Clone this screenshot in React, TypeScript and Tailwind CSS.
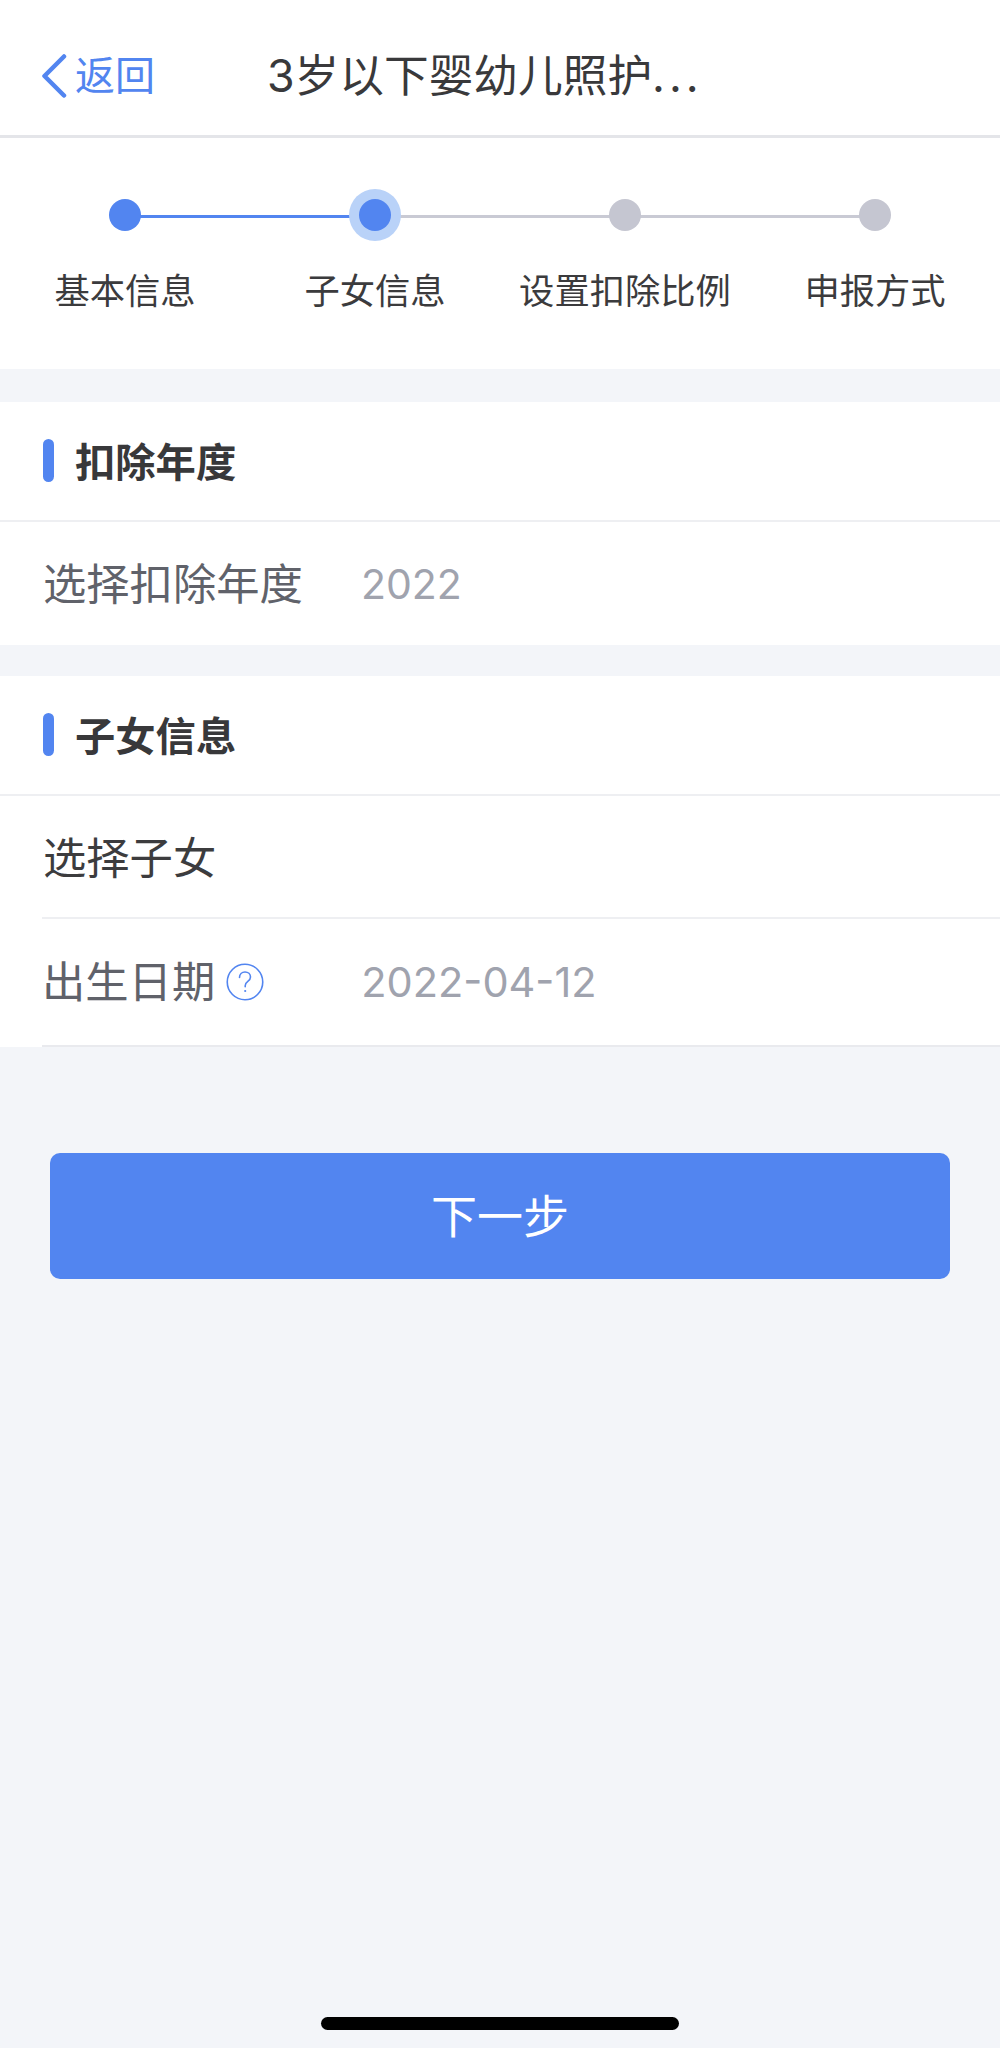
import React from "react";

const font = { fontFamily: '"Inter", "Noto Sans CJK SC", sans-serif' };

function Step({ label, state }: { label: string; state: "done" | "current" | "todo" }) {
  return (
    <div className="flex w-[250px] flex-col items-center">
      <div className="flex h-[54px] w-[54px] items-center justify-center">
        {state === "current" ? (
          <div className="relative z-10 flex h-[52px] w-[52px] items-center justify-center rounded-full bg-[#b9d2f8]">
            <div className="h-[32px] w-[32px] rounded-full bg-[#5285f0]" />
          </div>
        ) : (
          <div className={"relative z-10 h-[32px] w-[32px] rounded-full " + (state === "done" ? "bg-[#5285f0]" : "bg-[#c5c6d1]")} />
        )}
      </div>
      <div className="mt-[27px] whitespace-nowrap text-[35.3px] leading-[46px] text-[#3b3b3d]">{label}</div>
    </div>
  );
}

function SectionTitle({ title }: { title: string }) {
  return (
    <div className="flex h-[120px] items-center border-b-2 border-[#eeeff2] pb-[1px] pl-[43px]">
      <div className="h-[43px] w-[11px] rounded-full bg-[#5285f0]" />
      <div className="ml-[21px] mt-[5px] text-[40.3px] font-bold leading-[50px] text-[#38383a]">{title}</div>
    </div>
  );
}

export default function App() {
  return (
    <div className="relative flex h-[2048px] w-[1000px] flex-col overflow-hidden bg-[#f3f5f9]" style={font}>
      <header className="relative flex h-[138px] items-center border-b-[3px] border-[#e4e5e9] bg-white pl-[41px] pt-[17px]">
        <svg width="26" height="44" viewBox="0 0 26 44" fill="none" className="-mt-[1px] shrink-0">
          <path d="M23 2.5 3.5 22 23 41.5" stroke="#5285f0" strokeWidth="4.5" strokeLinecap="round" strokeLinejoin="round" />
        </svg>
        <div className="ml-[8px] text-[40px] leading-[50px] text-[#5285f0]">返回</div>
        <div className="ml-[112px] whitespace-nowrap text-[44.7px] leading-[56px] text-[#39393b]">
          3岁以下婴幼儿照护<span className="tracking-[4px]">...</span>
        </div>
      </header>

      <section className="relative flex h-[231px] justify-start bg-white pt-[50px]">
        <div className="absolute left-[125px] top-[77px] h-[3px] w-[250px] bg-[#5285f0]" />
        <div className="absolute left-[375px] top-[77px] h-[3px] w-[500px] bg-[#c9cad4]" />
        <Step label="基本信息" state="done" />
        <Step label="子女信息" state="current" />
        <Step label="设置扣除比例" state="todo" />
        <Step label="申报方式" state="todo" />
      </section>

      <section className="mt-[33px] bg-white">
        <SectionTitle title="扣除年度" />
        <div className="flex h-[123px] items-center pl-[43px]">
          <div className="w-[318px] text-[43.3px] leading-[56px] text-[#60626a]">选择扣除年度</div>
          <div className="text-[41px] leading-[56px] text-[#a0a3ae]">2022</div>
        </div>
      </section>

      <section className="mt-[31px] bg-white">
        <SectionTitle title="子女信息" />
        <div className="ml-[42px] flex h-[123px] items-center border-b-2 border-[#eeeff2] pl-[1px] pt-[2px]">
          <div className="text-[43.3px] leading-[56px] text-[#3c3c3e]">选择子女</div>
        </div>
        <div className="ml-[42px] flex h-[128px] items-center border-b-2 border-[#e9eaee]">
          <div className="text-[43.3px] leading-[56px] text-[#60626a]">出生日期</div>
          <svg width="38" height="38" viewBox="0 0 38 38" fill="none" className="ml-[11px] shrink-0">
            <circle cx="19" cy="19" r="17.75" stroke="#5285f0" strokeWidth="1.6" />
            <path d="M13.5 14.5c0-3.3 2.4-5.5 5.5-5.5s5.5 2.2 5.5 5c0 2-1 3.2-2.7 4.4-1.7 1.2-2.6 2.2-2.6 4.4v1" stroke="#5285f0" strokeWidth="1.6" strokeLinecap="round" />
            <circle cx="19.2" cy="28" r="1.1" fill="#5285f0" />
          </svg>
          <div className="ml-[97px] text-[41.5px] leading-[56px] text-[#a0a3ae]">2022-04-12</div>
        </div>
      </section>

      <button className="mx-[50px] mt-[106px] flex h-[126px] w-[900px] items-center justify-center rounded-[10px] bg-[#5285f0] text-[46px] text-white">
        下一步
      </button>

      <div className="absolute bottom-[18px] left-[321px] h-[13px] w-[358px] rounded-full bg-black" />
    </div>
  );
}
